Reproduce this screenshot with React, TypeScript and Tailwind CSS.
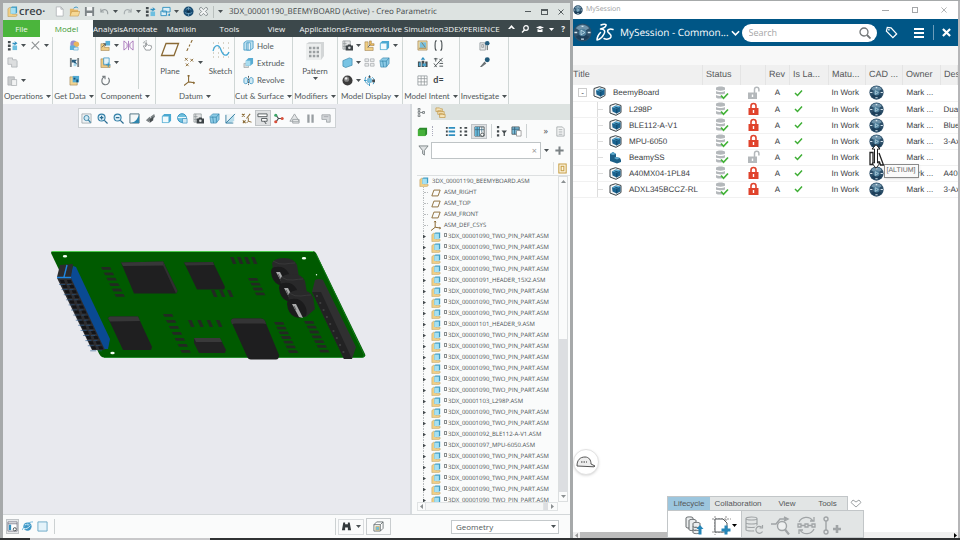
import type { ReactNode } from "react";
import clsx from "clsx";

const BLUE = "#2f8fc0";
const BROWN = "#8a6a35";
const INK = "#444b4e";
const GREY = "#a9adaf";

// All toolbar glyphs are drawn on a 12x12 grid
const glyphs: Record<string, ReactNode> = {
  asm: (
    <>
      <path d="M1 3l2-1.5h3V9h5v1.5L9.500 11.500H1z" fill="#f0cf86" stroke="#b08c48" strokeWidth=".5" />
      <path d="M4 2l1.500-1.500H11V7L9.500 8.500H4z" fill="#3f9cc4" />
      <path d="M4 2h5.500v6.500H4z" fill="#a5e0f2" />
    </>
  ),
  newFile: <path d="M2.500 1h5l2.500 2.500V11h-7.500zM7.500 1v2.500H10" fill="#fff" stroke={GREY} strokeWidth=".8" />,
  open: (
    <>
      <path d="M1 3h4l1 1h4v7H1z" fill="#e5b765" />
      <path d="M3 6h9l-2 5H1z" fill="#f6d894" stroke="#b98a3c" strokeWidth=".5" />
      <path d="M5 2.500c2-2 4-1.500 5 0" fill="none" stroke={BLUE} />
    </>
  ),
  save: (
    <>
      <path d="M1 1h9.500l.5.500V11H1z" fill="#7d8487" />
      <path d="M3 1h6v4H3zM3 7.500h6V11H3z" fill="#f2f4f4" />
    </>
  ),
  undo: <path d="M2 3v3.500h3.500M2.300 6C5 2.500 10 3.500 9.500 9" fill="none" stroke="#9aa1a3" strokeWidth="1.200" />,
  redo: <path d="M10 3v3.500H6.500M9.700 6C7 2.500 2 3.500 2.500 9" fill="none" stroke="#a9b0b2" strokeWidth="1.200" />,
  regen: (
    <>
      <path d="M1 1h3v2.500H1zM1 5h3v2.500H1zM1 9h3v2.500H1z" fill={INK} />
      <path d="M6 6h5v5H6z" fill="#6dbfe0" />
      <path d="M6 3h3l-1-2 3.500 2.500L8 6V4.500H6z" fill={BLUE} />
    </>
  ),
  windows: (
    <>
      <path d="M3 1.500h8v5H3zM1 5.500h6v5H1z" fill="#d9eef7" stroke={BLUE} />
      <path d="M8 10l3-2v3z" fill={BLUE} />
    </>
  ),
  globe: (
    <>
      <circle cx="6" cy="6" r="5.500" fill="#174a70" />
      <path d="M3 4c2-2 4-2 6 0M2 7c3 2 5 2 8 0M6 1v10" fill="none" stroke="#7fb4d2" strokeWidth=".7" />
      <circle cx="6" cy="6" r="1.500" fill="#0c2d48" />
    </>
  ),
  closeBox: <path d="M2 2l1.500-.5L6 4l2.500-2.500L10 2l.5 1.500L8 6l2.500 2.500L10 10l-1.500.5L6 8l-2.500 2.500L2 10l-.5-1.500L4 6 1.500 3.500z" fill="#f3f5f5" stroke="#777f82" strokeWidth=".9" />,
  cross: <path d="M2 2l8 8.500M10 1.500L1.500 10" stroke="#8d9294" strokeWidth="1.200" fill="none" />,
  copy: <path d="M1 1h5v2h4l1 1v7H5V8H1z" fill="#dcdedf" stroke={GREY} strokeWidth=".8" />,
  paste: (
    <>
      <path d="M1 2h7v9H1z" fill="#c9cccd" stroke={GREY} strokeWidth=".8" />
      <path d="M5 5h5.500v6.500H5z" fill="#f1f2f2" stroke={GREY} strokeWidth=".8" />
    </>
  ),
  userFeature: (
    <>
      <circle cx="5" cy="4" r="3.500" fill="#9b8fd0" />
      <circle cx="8" cy="4.500" r="3" fill="#eab65d" />
      <path d="M1 6h5l1 1v4H1z" fill="#5fb1d8" />
      <path d="M5 8h5v3H5z" fill="#d7ecf6" stroke={BLUE} strokeWidth=".5" />
    </>
  ),
  copyGeom: (
    <>
      <path d="M1 1h2v10H1zM9 1h2v10H9z" fill="#7a8184" />
      <path d="M3 3h6l-2 2 2 3H7L5 6H3z" fill="#2b5f80" />
      <path d="M5 7h3v3H5z" fill="#a5d9ee" />
    </>
  ),
  shrinkwrap: (
    <>
      <path d="M1 2h8v9H1z" fill="#f0d493" stroke={BROWN} strokeWidth=".5" />
      <path d="M4 1h7v7H4z" fill="#52aad2" />
      <path d="M5 3h2v2H5zM8 5h2v3H8z" fill="#174f74" />
    </>
  ),
  assemble: (
    <>
      <path d="M1 4h4v4h5v3.500H1z" fill="#eecb83" stroke={BROWN} strokeWidth=".5" />
      <path d="M6 1h5v5H6z" fill="#58afd6" />
      <path d="M2 8l4-4M6 6.500V4H3.500" stroke={INK} strokeWidth=".8" fill="none" />
    </>
  ),
  create: (
    <>
      <path d="M1 2h3v7h7v2.500H1z" fill="#eecb83" stroke={BROWN} strokeWidth=".5" />
      <path d="M4 1h6v7H4z" fill="#e3f3f9" stroke={BLUE} strokeWidth=".8" />
      <path d="M9 6v5M6.500 8.500h5" stroke={BLUE} />
    </>
  ),
  repeat: <path d="M2.500 1.500h3v3M5 2C1 3.500 1 9.500 5 10.500s7-4 4-7.500" fill="none" stroke="#777d80" strokeWidth="1.200" />,
  mirror: <path d="M1 1l3.500 3v4L1 11zM11 1L7.500 4v4L11 11zM6 1v10" fill="none" stroke="#a26bb5" strokeWidth=".9" />,
  drag: (
    <>
      <path d="M4 11L1.500 6.500l1-.5L4 7.500V3h1v3l1-1 1 1 1-.5 1 1 1-.5.5 2L9 11z" fill="#fff" stroke="#777d80" strokeWidth=".8" />
      <path d="M4.500 0v2M1 3h2M2 1l1 1" stroke="#777d80" strokeWidth=".7" />
    </>
  ),
  axis: <path d="M9 0L7.500 3M6.500 5l-1 2M4.500 9L3 12" stroke={BROWN} strokeWidth="1.200" />,
  points: <path d="M1 1l3 3m0-3L1 4M7 2l3 3m0-3L7 5M2 7l3 3m0-3l-3 3" stroke={BROWN} strokeWidth="1" />,
  csys: <path d="M5 0v7.500M5 7.500l6.500 1M5 7.500L0 11.500M4 1.500L5 0l1 1.500M10 7.500l1.500 1-1.500 1" fill="none" stroke={BROWN} strokeWidth="1.200" />,
  hole: (
    <>
      <path d="M1 3l3-2h7v8l-3 2H1z" fill="#bfe2f0" stroke={BLUE} strokeWidth=".8" />
      <path d="M4 3h4v8H4z" fill="#fff" stroke={BLUE} strokeWidth=".7" />
      <path d="M5.500 3v8" stroke={BLUE} />
    </>
  ),
  extrude: (
    <>
      <path d="M1 7h5v4.500H1z" fill="#d5d8d9" stroke="#8d9497" strokeWidth=".6" />
      <path d="M3 4l3-3h5v6L8 9.500H3z" fill="#58acd3" />
      <path d="M3 4h5v5.500H3z" fill="#a9dcef" />
    </>
  ),
  revolve: (
    <>
      <path d="M1 5c0-3 4-3 4 0v3c0 2-4 2-4 0zM7 5c0-3 4-3 4 0v3c0 2-4 2-4 0z" fill="#cfe9f4" stroke={BLUE} strokeWidth=".8" />
      <path d="M6 1v10" stroke={INK} strokeDasharray="2 1" />
    </>
  ),
  camera: (
    <>
      <path d="M1 1h8v9H1zM3 1v9M1 4h4M1 7h4" fill="#e4e6e7" stroke="#8d9497" strokeWidth=".8" />
      <path d="M4 6h2l.5-1h3l.5 1h2v5.500H4z" fill="#3d4447" />
      <circle cx="8" cy="8.500" r="1.400" fill="#dfe2e3" />
    </>
  ),
  section: <path d="M1 4l7-3 3 1v7l-7 2.500L1 10z" fill="#78c4e4" stroke="#3280a5" strokeWidth=".7" />,
  sphere: (
    <>
      <circle cx="6" cy="6" r="5.500" fill="#3b3b3b" />
      <circle cx="5" cy="4.500" r="2.800" fill="#858585" />
      <circle cx="4.500" cy="3.700" r="1.300" fill="#eee" />
    </>
  ),
  explode: (
    <>
      <path d="M1 2h3.500v6H10v3.500H1z" fill="#f0cf86" stroke={BROWN} strokeWidth=".5" />
      <path d="M6 1h2v3h3v2H6z" fill="#eebd5e" stroke={BROWN} strokeWidth=".5" />
      <path d="M4 8l3-3" stroke={INK} strokeWidth=".8" />
    </>
  ),
  shaded: (
    <>
      <path d="M1 3.500L3.500 1H11v7.500L8.500 11H1z" fill="#4ba9d2" />
      <path d="M1.500 3.500h7v7h-7z" fill="#f1fafd" stroke="#4ba9d2" strokeWidth=".6" />
    </>
  ),
  listGrey: <path d="M1 2h4v3H1zM1 7h4v3H1zM7 2h4v3H7zM7 7h4v3H7z" fill="#e9ebeb" stroke={GREY} strokeWidth=".8" />,
  cylinders: (
    <>
      <path d="M1 4l3-3h7v6l-3 4H2z" fill="#8ccbe6" stroke="#3585ac" strokeWidth=".7" />
      <path d="M1.500 4.500h6.500v6M4 4l1 7M8 4.500L11 1" fill="none" stroke="#3585ac" strokeWidth=".8" />
    </>
  ),
  spin: (
    <>
      <path d="M4 4h4v4H4z" fill="#7cc4e2" stroke={BLUE} strokeWidth=".6" />
      <path d="M6 0v3M6 9v3M0 6h3M9 6h3M2 2c-2 4 0 7 3 8.500M10 10c2-4 1-6-1-7.500" fill="none" stroke={BLUE} />
      <path d="M5 1h2v2H5zM9 5h3v3H9z" fill={INK} />
    </>
  ),
  family: (
    <>
      <path d="M1 1h10v10H1z" fill="#f3dca5" stroke={BROWN} strokeWidth=".6" />
      <path d="M3 2.500h7v6H3z" fill="#76c0e0" />
      <path d="M2 9h8M5 2.500L9 8" stroke={BROWN} strokeWidth=".8" />
    </>
  ),
  brackets: <path d="M4 1H3C2 2 2 10 3 11h1M8 1h1c1 1 1 9 0 10H8" fill="none" stroke={INK} strokeWidth="1.200" />,
  publish: (
    <>
      <path d="M1 5h3v6H1zM5 4h3v7H5zM9 5h2.500v6H9z" fill={INK} />
      <path d="M2 6h2v4H2zM6 7h4v3H6z" fill="#49a2cb" />
      <path d="M6.500 0L9 3H4z" fill={BLUE} />
    </>
  ),
  switchDim: <path d="M1 2h4M3 1v4M7 7h4M7 10h4M10.500 1L1.500 11M7 2l3 3M1 7l3 4" fill="none" stroke={INK} />,
  tableGrid: <path d="M1 1h10v10H1zM1 4h10M1 7.500h10M4.500 1v10M8 1v10" fill="#fff" stroke="#8b9194" strokeWidth=".8" />,
  inspect: (
    <>
      <path d="M1 3h6v8H1zM3 5h2v3H3z" fill="#e5e7e8" stroke="#8b9194" strokeWidth=".8" />
      <circle cx="9" cy="3.500" r="2.500" fill="#275f80" />
      <path d="M9 6v5" stroke={INK} />
    </>
  ),
  measure: (
    <>
      <path d="M1 11l5-6 2 2-5 4z" fill="#6b7275" />
      <circle cx="9" cy="3" r="2.700" fill="#1f5878" />
    </>
  ),
  refit: (
    <>
      <path d="M1 1h10v10H1z" fill="#eef3f5" stroke="#98a1a5" strokeWidth=".8" />
      <circle cx="6" cy="5.500" r="2.800" fill="#cfe9f5" stroke="#3b83a6" />
      <path d="M8 7.500l2.500 3" stroke="#3b83a6" strokeWidth="1.500" />
    </>
  ),
  zoomIn: (
    <>
      <circle cx="5" cy="5" r="3.800" fill="#dff1f9" stroke="#3480a8" strokeWidth="1.200" />
      <path d="M8 8l3.500 3.500M3 5h4M5 3v4" stroke="#2c6d92" strokeWidth="1.400" />
    </>
  ),
  zoomOut: (
    <>
      <circle cx="5" cy="5" r="3.800" fill="#dff1f9" stroke="#3480a8" strokeWidth="1.200" />
      <path d="M8 8l3.500 3.500M3 5h4" stroke="#2c6d92" strokeWidth="1.400" />
    </>
  ),
  repaint: (
    <>
      <path d="M1 1h10v10H1z" fill="#f4f8f9" stroke="#4c6d7c" />
      <path d="M11 2v9H2c5-1 7-4 9-9z" fill="#2e86ae" />
    </>
  ),
  render: (
    <>
      <path d="M1 8l4-4 2 2-3 4zM6 4l4-3 1 3-3 3z" fill="#7b8285" />
      <path d="M5 7l4-3v4l-4 3z" fill="#474d50" />
    </>
  ),
  globeBox: (
    <>
      <circle cx="5.500" cy="5.500" r="4.800" fill="#6fc0de" stroke={BLUE} />
      <path d="M1 5h9" stroke="#fff" />
      <path d="M6 6h5v5H6z" fill="#cfe8f3" stroke={BLUE} strokeWidth=".7" />
    </>
  ),
  plane2: (
    <>
      <path d="M1 1h9v10H1z" fill="#eef4f6" />
      <path d="M1 10L10 1v7l-3 3H1z" fill="#b7dceb" />
      <path d="M1 11L11 1M1 2v9h8" stroke="#397fa1" fill="none" />
    </>
  ),
  datumDisplay: (
    <>
      <path d="M1 1l3 3m0-3L1 4M2 8l3 3m0-3l-3 3M10 1L6 6" stroke={BROWN} strokeWidth="1.100" />
      <path d="M8 5v4l3.500 1M8 9l-2 2" stroke={BROWN} fill="none" />
    </>
  ),
  annot: (
    <>
      <path d="M1 1h10v3H1zM5 6h6v3H5z" fill="#fff" stroke={INK} strokeWidth=".9" />
      <path d="M8 9l2 3" stroke={INK} />
    </>
  ),
  spinCenter: (
    <>
      <path d="M3 2l3 4M3 10l3-4h5" stroke={INK} strokeWidth="1.200" fill="none" />
      <circle cx="3" cy="2.500" r="1.700" fill="#3aa567" />
      <circle cx="3" cy="9.500" r="1.700" fill="#d8503c" />
      <circle cx="10" cy="6" r="1.700" fill="#d8503c" />
    </>
  ),
  warn: <path d="M6 1L1 9h10zM4 7h7v4H4z" fill="#e3e5e7" stroke="#9fa4a7" />,
  pause: <path d="M2.500 1.500h2.500v9H2.500zM7 1.500h2.500v9H7z" fill="#989ea2" />,
  play: <path d="M1 2h9v8H6V7H1zM3 4h5" fill="#d6d9dc" stroke="#a5aaae" />,
  funnel: <path d="M1 1h10L7 6v5L5 9.500V6z" fill="#dfe2e3" stroke="#70777a" strokeWidth=".9" />,
  greenCube: (
    <>
      <path d="M1 4l2-2h8v7l-2 2H1z" fill="#2b8a2b" />
      <path d="M1 4h8v7H1z" fill="#46b03a" />
    </>
  ),
  list: (
    <>
      <path d="M4 1h7v2H4zM4 5h7v2H4zM4 9h7v2H4z" fill={BLUE} />
      <path d="M1 1h2v2H1zM1 5h2v2H1zM1 9h2v2H1z" fill={INK} />
    </>
  ),
  listDots: <path d="M2 1h2v2H2zM2 5h2v2H2zM2 9h2v2H2zM7 1h3v2H7zM7 5h3v2H7zM7 9h3v2H7z" fill={INK} />,
  columns: (
    <>
      <path d="M1 1h10v10H1z" fill="#fff" stroke={INK} strokeWidth=".9" />
      <path d="M1 1h5v10H1z" fill="#65b7d9" />
      <path d="M1 4h10M3.500 1v10M6 1v10M8.500 1v6" stroke="#39657c" strokeWidth=".8" />
      <circle cx="9" cy="9.500" r="1.800" fill="#fff" stroke={INK} />
    </>
  ),
  treeFilter: <path d="M1 0h2.500v2.500H1zM1 4.500h2.500V7H1zM1 9h2.500v2.500H1zM6 5h6L9.700 7.500V11H8.300V7.500z" fill={INK} />,
  treeSet: (
    <>
      <path d="M1 1h8v8H1z" fill="#7cc1de" stroke={INK} strokeWidth=".8" />
      <path d="M1 3.500h8M4 1v8" stroke="#37637b" />
      <path d="M6 5h5v6H6z" fill="#fff" stroke="#777" strokeWidth=".7" />
    </>
  ),
  page: <path d="M2 1h6l2 2v8H2zM4 4h4M4 6.500h4M4 9h4" fill="#f4f5f5" stroke="#989ea1" strokeWidth=".8" />,
  treeTab: <path d="M1.500.5h2.500v2.500H1.500zM1.500 4.700h2.500v2.500H1.500zM1.500 9h2.500v2.500H1.500zM4.500 6H7.500M7.500 4.700h2.500v2.500H7.500z" fill="none" stroke="#5f676a" />,
  folders: <path d="M1 1h4l1 1h2v3H1zM3 4h4l1 1h2v3H3zM5 7h3l1 1h2v3.500H5z" fill="#f4e3b8" stroke="#c39a4b" strokeWidth=".8" />,
  plus: <path d="M6 1.500v9M1.500 6h9" stroke="#7b8285" strokeWidth="2.200" />,
  colTool: <path d="M2 1h8v10H2zM4.500 3.500h3v5h-3z" fill="#fdf6e2" stroke="#c59c42" strokeWidth="1.100" />,
  plane: <path d="M3.500 2.500H11L8.500 9.500H1z" fill="none" stroke={BROWN} strokeWidth="1.100" />,
  navigator: (
    <>
      <path d="M1 1h10v10H1zM1 3h10" fill="#fff" stroke="#667" strokeWidth=".8" />
      <path d="M2 4h2.500v6H2z" fill={BLUE} />
      <circle cx="8.500" cy="9" r="1.700" fill="#fff" stroke={INK} />
    </>
  ),
  browser: (
    <>
      <circle cx="6" cy="6" r="4.500" fill="#3f97c6" />
      <path d="M3 4c2-1 3 1 5 0M2 8c2 1 5 0 7-3" stroke="#d9f0fa" fill="none" />
      <path d="M0 10C3 4 7 1 12 1" stroke="#6cb8dc" fill="none" />
    </>
  ),
  screen: <path d="M1 1h10v10H1z" fill="#e4f3fa" stroke="#6aa9c6" />,
  binoculars: <path d="M2.500 1.500h2v2h3v-2h2L11 10H7.500V7h-3v3H1z" fill="#33393c" />,
  cubeWire: (
    <>
      <path d="M1 4l3-3h7v7l-3 3H1zM1 4h7v7M8 4l3-3" fill="#fff" stroke="#5f676a" strokeWidth=".9" />
      <path d="M3 6h4v4H3z" fill="#71bfdf" stroke="#d8aa4e" strokeWidth=".7" />
    </>
  ),
};

function Glyph({ name, className = "size-[11px]" }: { name: string; className?: string }) {
  return (
    <svg viewBox="0 0 12 12" className={clsx("block shrink-0", className)} aria-hidden="true">
      {glyphs[name]}
    </svg>
  );
}

function Caret({ className = "text-[#4a5154]" }: { className?: string }) {
  return (
    <svg viewBox="0 0 5 3" className={clsx("block h-[3px] w-[5px] shrink-0", className)} aria-hidden="true">
      <path d="M0 0h5L2.500 3z" fill="currentColor" />
    </svg>
  );
}

function Tool({ name, label, caret, className }: { name: string; label: string; caret?: boolean; className?: string }) {
  return (
    <button type="button" aria-label={label} className={clsx("flex items-center gap-[3px]", className)}>
      <Glyph name={name} />
      {caret && <Caret />}
    </button>
  );
}

/* ---------- Creo ---------- */

function CreoTitleBar() {
  return (
    <div className="flex h-[17px] items-center bg-[#dde3e1] pl-[4px] text-[#3f4648]">
      <Glyph name="asm" />
      <span className="ml-px w-[35px] text-[11px] leading-3 font-semibold text-[#3c4447]">creo·</span>
      <div className="flex shrink-0 items-center gap-[4px]">
        <Tool name="newFile" label="New" />
        <Tool name="open" label="Open" />
        <Tool name="save" label="Save" />
        <Tool name="undo" label="Undo" caret />
        <Tool name="redo" label="Redo" caret />
        <Tool name="regen" label="Regenerate" />
        <Tool name="windows" label="Windows" caret />
        <Tool name="globe" label="3DEXPERIENCE" />
        <Tool name="closeBox" label="Close" />
        <span className="h-3 w-px bg-[#b9c0be]" />
        <Caret />
      </div>
      <h1 className="ml-[6px] whitespace-nowrap text-[8px]">3DX_00001190_BEEMYBOARD (Active) - Creo Parametric</h1>
      <div className="ml-auto flex items-center gap-[10px] pr-[6px] text-[#555c5e]">
        <button type="button" aria-label="Minimize" className="h-px w-[6px] bg-current" />
        <button type="button" aria-label="Restore" className="h-[6px] w-[7px] border border-t-2 border-current" />
        <button type="button" aria-label="Close window">
          <svg viewBox="0 0 6 6" className="block size-[6px]">
            <path d="M.5.500l5 5m0-5l-5 5" stroke="currentColor" />
          </svg>
        </button>
      </div>
    </div>
  );
}

function CreoTabs() {
  return (
    <nav className="flex h-[17px] items-stretch bg-[#3c484b] text-[8px] whitespace-nowrap text-[#f3f5f5]">
      <button type="button" className="w-[37px] shrink-0 bg-[#4bb53c]">File</button>
      <button type="button" className="w-[53px] shrink-0 bg-[#fafbfb] text-[#3f9a35]">Model</button>
      <button type="button">Analysis</button>
      <button type="button">Annotate</button>
      <button type="button" className="w-[48px] shrink-0">Manikin</button>
      <button type="button" className="w-[48px] shrink-0">Tools</button>
      <button type="button" className="w-[46px] shrink-0">View</button>
      <button type="button">Applications</button>
      <button type="button">Framework</button>
      <button type="button">Live Simulation</button>
      <button type="button">3DEXPERIENCE</button>
      <div className="ml-auto flex items-center gap-[6px] pr-[5px]">
        <svg viewBox="0 0 47 10" className="h-[10px] w-[47px] shrink-0" aria-hidden="true">
          <path d="M0 5l3.500-4L7 5H5L3.500 3.500 2 5z" fill="#fff" />
          <circle cx="18" cy="4" r="2.300" fill="none" stroke="#fff" strokeWidth="1.200" />
          <path d="M16.500 6L14 8.500" stroke="#fff" strokeWidth="1.500" />
          <path d="M28 3.500L32 2l4 1.500L32 5zM29.500 5v3h5V5L32 6z" fill="#fff" />
          <path d="M41 4h5l-2.500 3z" fill="#fff" />
        </svg>
        <button type="button" className="font-bold">?</button>
      </div>
    </nav>
  );
}

function Group({ title, className, children }: { title: string; className: string; children: ReactNode }) {
  return (
    <section className={clsx("flex shrink-0 flex-col border-r border-[#cfd6d5]", className)}>
      <div className="flex h-[52px] items-stretch">{children}</div>
      <button type="button" className="flex h-[14px] items-center justify-center gap-[3px] whitespace-nowrap">
        {title}
        <Caret />
      </button>
    </section>
  );
}

function Stack({ className, children }: { className?: string; children: ReactNode }) {
  return <div className={clsx("grid grid-rows-3 items-center", className)}>{children}</div>;
}

function Ribbon() {
  return (
    <div className="flex h-[67px] overflow-hidden bg-[#fafbfb] font-[Lato,sans-serif] text-[8px] text-[#51585a]">
      <Group title="Operations" className="w-[50px]">
        <Stack className="pl-[4px]">
          <Tool name="regen" label="Regenerate" caret />
          <Tool name="copy" label="Copy" />
          <Tool name="paste" label="Paste" caret />
        </Stack>
        <Stack className="pl-[4px]">
          <Tool name="cross" label="Delete" caret />
        </Stack>
      </Group>
      <Group title="Get Data" className="w-[43px]">
        <Stack className="w-full justify-center">
          <Tool name="userFeature" label="User-Defined Feature" />
          <Tool name="copyGeom" label="Copy Geometry" />
          <Tool name="shrinkwrap" label="Shrinkwrap" />
        </Stack>
      </Group>
      <Group title="Component" className="w-[60px]">
        <Stack className="pl-[4px]">
          <Tool name="assemble" label="Assemble" caret />
          <Tool name="create" label="Create" caret />
          <Tool name="repeat" label="Repeat" />
        </Stack>
        <Stack className="border-r border-[#cfd6d5] px-[4px]">
          <Tool name="mirror" label="Mirror Component" />
        </Stack>
        <Stack className="pl-[3px]">
          <Tool name="drag" label="Drag Components" />
        </Stack>
      </Group>
      <Group title="Datum" className="w-[79px]">
        <button type="button" className="flex w-[28px] flex-col items-center pt-[5px]">
          <svg viewBox="0 0 20 16" className="h-[16px] w-[20px]">
            <path d="M6 1.500h12.500L14 13.500H1.500z" fill="none" stroke={BROWN} strokeWidth="1.300" />
          </svg>
          <span className="mt-[7px]">Plane</span>
        </button>
        <Stack className="w-[24px]">
          <Tool name="axis" label="Axis" />
          <Tool name="points" label="Point" caret />
          <Tool name="csys" label="Coordinate System" />
        </Stack>
        <button type="button" className="flex w-[25px] flex-col items-center pt-[5px]">
          <svg viewBox="0 0 18 16" className="h-[16px] w-[18px]">
            <path d="M1 1h16M1 6h16M1 11h16M1 15h16" stroke="#b5ab94" strokeDasharray="1 4" fill="none" />
            <path d="M1 9C3 2 7 2 9 8s6 7 8 2" fill="none" stroke="#45a8d6" strokeWidth="1.300" />
          </svg>
          <span className="mt-[7px]">Sketch</span>
        </button>
      </Group>
      <Group title="Cut & Surface" className="w-[58px]">
        <Stack className="pl-[8px]">
          <button type="button" className="flex items-center gap-[3px]"><Glyph name="hole" />Hole</button>
          <button type="button" className="flex items-center gap-[3px]"><Glyph name="extrude" />Extrude</button>
          <button type="button" className="flex items-center gap-[3px]"><Glyph name="revolve" />Revolve</button>
        </Stack>
      </Group>
      <Group title="Modifiers" className="w-[45px]">
        <button type="button" className="flex w-full flex-col items-center pt-[4px]">
          <svg viewBox="0 0 20 20" className="size-[20px]">
            <path d="M1 3l3-2h15v14l-3 4H1z" fill="#d3d6d7" />
            <path d="M1 3h15v16H1z" fill="#eceeee" />
            <path d="M4 7h10M4 11h10M4 15h10" stroke="#9a9fa1" strokeWidth="2.500" strokeDasharray="2.500 1.300" />
          </svg>
          <span className="mt-[4px]">Pattern</span>
          <Caret />
        </button>
      </Group>
      <Group title="Model Display" className="w-[65px]">
        <Stack className="pl-[4px]">
          <Tool name="camera" label="Manage Views" caret />
          <Tool name="section" label="Section" caret />
          <Tool name="sphere" label="Appearances" caret />
        </Stack>
        <Stack className="pl-[3px]">
          <Tool name="explode" label="Exploded View" />
          <Tool name="listGrey" label="Toggle Status" />
          <Tool name="spin" label="Perspective" />
        </Stack>
        <Stack className="pl-[4px]">
          <Tool name="shaded" label="Display Style" caret />
          <Tool name="cylinders" label="Component Display" />
        </Stack>
      </Group>
      <Group title="Model Intent" className="w-[57px]">
        <Stack className="pl-[14px]">
          <Tool name="family" label="Component Interface" />
          <Tool name="publish" label="Publish Geometry" />
          <Tool name="tableGrid" label="Family Table" />
        </Stack>
        <Stack className="pl-[5px]">
          <Tool name="brackets" label="Parameters" />
          <Tool name="switchDim" label="Switch Dimensions" />
          <button type="button" className="text-[9px] leading-3 font-bold text-[#3c4447]">d=</button>
        </Stack>
      </Group>
      <Group title="Investigate" className="w-[49px]">
        <Stack className="w-full justify-center">
          <Tool name="inspect" label="Bill of Materials" />
          <Tool name="measure" label="Reference Viewer" />
        </Stack>
      </Group>
    </div>
  );
}

const viewTools = [
  "refit", "zoomIn", "zoomOut", "repaint", "render", "shaded", "globeBox", "camera",
  "cylinders", "plane2", "datumDisplay", "annot", "spinCenter", "warn", "pause", "play",
];

// Small surface-mount parts: start point, step, count, orientation
const smd = [
  { x: 101, y: 267, dx: 2.7, dy: 5.4, n: 6, flat: true },
  { x: 163, y: 314, dx: 2.9, dy: 6, n: 7, flat: true },
  { x: 248, y: 278, dx: 2.3, dy: 4.8, n: 4, flat: true },
  { x: 274, y: 322, dx: 2.3, dy: 4.7, n: 7, flat: true },
  { x: 304, y: 321, dx: 2.5, dy: 4.8, n: 7, flat: true },
  { x: 188, y: 320, dx: 9.3, dy: 0, n: 4, flat: false },
  { x: 230, y: 257, dx: 7, dy: 0, n: 4, flat: false },
  { x: 211, y: 290, dx: 8, dy: 0, n: 3, flat: false },
];

const capacitors = [
  { x: 0, y: 0 },
  { x: 8, y: 16 },
  { x: 16, y: 32 },
];

function Board() {
  return (
    <svg viewBox="48 249 318 112" className="mt-[121px] h-[112px] w-[318px] shrink-0 overflow-visible" role="img" aria-label="Beemyboard assembly">
      <path d="M51 253q0-2 2-2h259q3 0 4 2l49 101q1 3-2 3.500H104q-3 0-5-4z" fill="#005a00" />
      <path d="M52 251.500h261" stroke="#5fe65f" strokeWidth=".8" />
      <path d="M104 357.500h258q3 0 2-3L316 254" stroke="#13831a" strokeWidth=".8" fill="none" />
      {smd.map((s) =>
        Array.from({ length: s.n }, (_, i) => (
          <path
            key={`${s.x}-${i}`}
            transform={`translate(${s.x + s.dx * i} ${s.y + s.dy * i})`}
            d={s.flat ? "M0 0h9l1.500 2.800H1.500z" : "M0 0h3.500l3 7H3z"}
            fill="#222a22"
          />
        )),
      )}
      {/* pin header, left */}
      <path d="M73 266l3 1 34 72-2 10h-8L70 277z" fill="#0a4a93" />
      <path d="M60 265l13-1-2 13H57z" fill="#2b2b2d" />
      <path d="M57 278h14l34 72H92z" fill="#2d2d30" />
      {Array.from({ length: 14 }, (_, i) => (
        <g key={i} transform={`translate(${i * 2.4} ${i * 5.1})`}>
          <path d="M60 280h4l1 3h-4zM67 280h4l1 3h-4z" fill="#141416" />
          <path d="M59 284.500h6M67 284.500h4" stroke="#23588c" strokeWidth=".6" />
        </g>
      ))}
      <path d="M57 277.500h14M67 265l-3 12" stroke="#1f86e0" strokeWidth="1.400" fill="none" />
      {/* ICs */}
      <path d="M121 262.500l42-1 14.500 29.500-1.500 2.500h-42z" fill="#1f1f20" />
      <path d="M121 262.500l42-1 2 4-42 .5z" fill="#373738" />
      <path d="M163 261.500l14.500 29.500-1.500 2.500-13-28z" fill="#303031" />
      <path d="M184 262.500l29-.5 12 25-1 2.500h-27z" fill="#1f1f20" />
      <path d="M184 262.500l29-.5 1 3-28 .5z" fill="#333334" />
      <path d="M108 318l2-1.500h28l14 30.500-1 3h-28z" fill="#1f1f20" />
      <path d="M108 318l2-1.500h28l2 4.500-30 .5z" fill="#373738" />
      <path d="M194 338h26l6 12-1 3h-26l-5-10z" fill="#222223" />
      <path d="M194 338h26l2 4h-26z" fill="#39393a" />
      <path d="M231 321q0-2.500 3-2.500h27q3 0 4 2.500l14 34q0 4.500-3 4.500h-25q-3 0-4-3z" fill="#1e1e1f" />
      <path d="M231 321q0-2.500 3-2.500h27q3 0 4 2.500l1 3-3-.500h-28q-2 0-3 1z" fill="#343435" />
      {/* capacitors */}
      {capacitors.map((c) => (
        <g key={c.x} transform={`translate(${c.x} ${c.y})`}>
          <path d="M272 263q3-5 12-5 10 0 13 7l2 12-9 8-15-3z" fill="#29292a" />
          <path d="M271 272q0-5 5-5 8-1 12 5t2 12q-5 3-11 1-7-3-8-13z" fill="#1b1b1c" />
          <path d="M276 272h4l7 14-4-1z" fill="#a9aaab" />
          <path d="M278 274l2 4" stroke="#444" strokeWidth=".8" />
          <path d="M273 261q6 4 12 3t10-1" stroke="#3e3e3f" strokeWidth=".7" fill="none" />
        </g>
      ))}
      {/* socket strip, right */}
      <path d="M312 292l3-12q4-2 8 0l33 67-4 12h-8z" fill="#303031" />
      <path d="M312 292h9l31 67h-8z" fill="#222223" />
      {Array.from({ length: 9 }, (_, i) => (
        <circle key={i} cx={317 + i * 3.3} cy={296 + i * 7} r="1.100" fill="#414142" />
      ))}
      <g fill="#f4fff4">
        <ellipse cx="65" cy="256.300" rx="2.200" ry="1.300" />
        <ellipse cx="112.500" cy="353" rx="2.200" ry="1.300" />
        <ellipse cx="304" cy="258.300" rx="2.200" ry="1.300" />
        <circle cx="316.500" cy="274.800" r=".7" />
      </g>
    </svg>
  );
}

function Viewport() {
  return (
    <main className="flex min-w-0 flex-1 flex-col items-center overflow-hidden bg-[#e8e9ee] pt-[4px]">
      <div className="flex h-[20px] shrink-0 items-center border border-[#cdd1d4] bg-[#fafbfc]">
        {viewTools.map((name) => (
          <button
            key={name}
            type="button"
            aria-label={name}
            className={clsx(
              "flex h-[16px] w-[16px] items-center justify-center",
              name === "annot" && "border border-[#c0c4c7] bg-[#dfe1e3]",
            )}
          >
            <Glyph name={name} />
          </button>
        ))}
      </div>
      <Board />
    </main>
  );
}

const two = "3DX_00001090_TWO_PIN_PART.ASM";
const parts = [
  two, two, two, two,
  "3DX_00001091_HEADER_15X2.ASM",
  two, two, two,
  "3DX_00001101_HEADER_9.ASM",
  two, two, two, two, two, two,
  "3DX_00001103_L298P.ASM",
  two, two,
  "3DX_00001092_BLE112-A-V1.ASM",
  "3DX_00001097_MPU-6050.ASM",
  two, two, two, two, two,
];

const datums = [
  { name: "ASM_RIGHT", icon: "plane" },
  { name: "ASM_TOP", icon: "plane" },
  { name: "ASM_FRONT", icon: "plane" },
  { name: "ASM_DEF_CSYS", icon: "csys" },
];

function ModelTree() {
  return (
    <aside className="flex w-[160px] shrink-0 flex-col border-l-2 border-[#d6dade] bg-[#fafbfb] text-[#4b5254]">
      <div className="flex h-[16px] bg-[#dde3e1]">
        <button type="button" aria-label="Model Tree" className="flex w-[19px] items-center justify-center bg-[#fafbfb]">
          <Glyph name="treeTab" className="size-[9px]" />
        </button>
        <button type="button" aria-label="Folder Browser" className="flex w-[19px] items-center justify-center">
          <Glyph name="folders" />
        </button>
      </div>
      <div className="flex h-[22px] items-center pl-[5px]">
        <Tool name="greenCube" label="Model" />
        <span className="mr-[12px] ml-[4px] h-[10px] border-l border-dotted border-[#aab]" />
        <Tool name="list" label="Show" />
        <Tool name="listDots" label="Expand" className="mr-[2px] ml-[2px]" />
        <button type="button" aria-label="Columns" className="flex h-[15px] w-[16px] items-center justify-center border border-[#c0c4c7] bg-[#dfe1e3]">
          <Glyph name="columns" />
        </button>
        <span className="mx-[4px] h-[14px] w-px bg-[#ccd1d2]" />
        <Tool name="treeFilter" label="Tree Filters" />
        <Tool name="treeSet" label="Settings" className="ml-[4px]" />
        <span className="ml-[4px] h-[14px] w-px bg-[#ccd1d2]" />
        <span className="ml-auto text-[9px]">»</span>
        <Tool name="page" label="Report" className="mr-[4px] ml-[7px]" />
      </div>
      <div className="flex h-[17px] items-center pl-[6px]">
        <Glyph name="funnel" />
        <div className="ml-[2px] flex h-[17px] min-w-0 flex-1 items-center border border-[#bfc4c6] bg-white pr-[3px]">
          <input aria-label="Filter tree" className="min-w-0 flex-1 text-[8px] outline-none" />
          <button type="button" aria-label="Clear" className="text-[9px] leading-3 text-[#999]">×</button>
        </div>
        <Caret className="mx-[3px] text-[#4a5154]" />
        <Tool name="plus" label="Add" className="mr-[5px] ml-[2px]" />
      </div>
      <div className="ml-[5px] flex h-[17px] items-end border-b border-[#dde0e1] pr-[2px] pb-px">
        <span className="ml-auto mr-[3px] h-[12px] w-px bg-[#dde0e1]" />
        <Glyph name="colTool" />
      </div>
      <div className="ml-[5px] flex min-h-0 flex-1">
        <ul className="min-w-0 flex-1 overflow-hidden text-[6px] leading-[11px] whitespace-nowrap">
          <li className="flex h-[11px] items-center gap-[3px] pl-[2px]">
            <Glyph name="asm" className="size-[10px]" />
            3DX_00001190_BEEMYBOARD.ASM
          </li>
          {datums.map((d) => (
            <li key={d.name} className="ml-[6px] flex h-[11px] items-center gap-[3px] border-l border-dotted border-[#b8bcbe]">
              <span className="w-[4px] border-t border-dotted border-[#b8bcbe]" />
              <Glyph name={d.icon} className="size-[10px]" />
              {d.name}
            </li>
          ))}
          {parts.map((name, i) => (
            <li key={i} className="ml-[6px] flex h-[11px] items-center border-l border-dotted border-[#b8bcbe]">
              <svg viewBox="0 0 4 5" className="mr-[5px] -ml-px h-[5px] w-[3px] shrink-0" aria-hidden="true">
                <path d="M0 0l4 2.500L0 5z" fill="#444b4e" />
              </svg>
              <Glyph name="asm" className="size-[10px]" />
              <span className="mr-px mb-[3px] ml-[3px] h-[4px] w-[3px] shrink-0 border border-[#8a8f91]" />
              {name}
            </li>
          ))}
        </ul>
        <div className="mr-[2px] flex w-[10px] flex-col items-center border border-[#dcdfe0] bg-[#dcdee1]">
          <div className="flex h-1/2 w-full justify-center bg-[#fafbfb] pt-[3px]">
            <Caret className="rotate-180 text-[#8b9092]" />
          </div>
          <div className="mt-auto flex h-[9px] w-full items-center justify-center bg-[#fafbfb]">
            <Caret className="text-[#8b9092]" />
          </div>
        </div>
      </div>
      <div className="mr-[12px] mb-[3px] ml-[5px] flex h-[9px] items-center border border-[#e0e3e4] text-[#8b9092]">
        <Caret className="mx-px rotate-90 text-[#8b9092]" />
        <span className="h-full flex-1 border-x border-[#e0e3e4] bg-[#f6f7f7]" />
        <span className="h-full w-[4px] bg-[#dcdee1]" />
        <Caret className="mx-[2px] -rotate-90 text-[#8b9092]" />
      </div>
    </aside>
  );
}

function StatusBar() {
  return (
    <footer className="flex h-[24px] shrink-0 items-center border-t border-[#d3d7d9] bg-[#fafbfb] pl-[3px] text-[#51585a]">
      <button type="button" aria-label="Navigator" className="flex h-[15px] w-[13px] items-center justify-center border border-[#c0c4c7] bg-[#e4e6e8]">
        <Glyph name="navigator" />
      </button>
      <Tool name="browser" label="Browser" className="ml-[3px]" />
      <Tool name="screen" label="Full Screen" className="ml-[4px]" />
      <span className="ml-[6px] h-[15px] w-px bg-[#ccd1d2]" />
      <div className="ml-auto flex h-[17px] items-center border-l border-[#ccd1d2] pl-[2px]">
        <div className="flex h-[16px] items-center gap-[4px] border border-[#dadddf] px-[2px]">
          <Glyph name="binoculars" />
          <Caret />
        </div>
        <button type="button" aria-label="Selection box" className="ml-[2px] flex h-[17px] w-[25px] items-center justify-center border border-[#c9cdcf]">
          <Glyph name="cubeWire" />
        </button>
      </div>
      <div className="mr-[11px] ml-[60px] flex h-[14px] w-[108px] items-center border border-[#c4c9cb] bg-white pr-[2px]">
        <select aria-label="Selection filter" className="flex-1 appearance-none pl-[4px] text-[8px] leading-[12px] outline-none">
          <option>Geometry</option>
        </select>
        <Caret />
      </div>
    </footer>
  );
}

/* ---------- MySession ---------- */

function Compass({ className }: { className?: string }) {
  return (
    <svg viewBox="0 0 20 20" className={clsx("block shrink-0", className)} aria-hidden="true">
      <circle cx="10" cy="10" r="9.500" fill="#2d4f69" />
      <path d="M3 5.500a8.500 8.500 0 0 1 14 0l-4 2.500a4.500 4.500 0 0 0-6 0z" fill="#6f93aa" />
      <path d="M3 14.500a8.500 8.500 0 0 0 14 0l-4-2.500a4.500 4.500 0 0 1-6 0z" fill="#1d3f5a" />
      <circle cx="10" cy="10" r="4" fill="#4e7f9b" />
      <path d="M8.500 7.500l4 2.500-4 2.500z" fill="none" stroke="#c3dfec" strokeWidth=".9" />
      <path d="M1.500 10h3M15.500 10h3M8.500 17h3M9 3.500h2" stroke="#d5e5ee" strokeWidth="1.400" />
    </svg>
  );
}

function SessionBar() {
  return (
    <header className="flex h-[27px] items-center bg-[#005686] font-['Open_Sans',sans-serif] text-white">
      <Compass className="size-[19px]" />
      <svg viewBox="0 0 18 19" className="ml-[4px] h-[19px] w-[18px] shrink-0" aria-label="3DS">
        <g fill="none" stroke="#fff" strokeWidth="1.500" strokeLinecap="round" strokeLinejoin="round">
          <path d="M5 2c2-1 6-1 5 .5C9.500 4 7 5.500 4.500 6c4 0 5 2 3.500 5-1.500 3-4 5.500-7 6 0-3 1-5 3.500-7.500" />
          <path d="M17 6.500c-3-1-6.500 0-5 2.500 1 1.500 4 2.500 3 5-1 2.500-5 2.500-7 1.500" />
        </g>
      </svg>
      <span className="ml-[6px] shrink-0 whitespace-nowrap text-[10px]">MySession - Common...</span>
      <button type="button" aria-label="Switch dashboard" className="ml-[2px] shrink-0">
        <svg viewBox="0 0 10 6" className="block h-[6px] w-[9px]">
          <path d="M1 1l4 4 4-4" fill="none" stroke="#fff" strokeWidth="1.800" />
        </svg>
      </button>
      <form className="mr-[8px] ml-[2px] flex h-[18px] min-w-0 flex-1 items-center rounded-full bg-white pr-[6px] pl-[7px]">
        <input
          aria-label="Search"
          placeholder="Search"
          className="min-w-0 flex-1 text-[9px] text-gray-700 outline-none placeholder:text-[#a6a6a6]"
        />
        <svg viewBox="0 0 12 12" className="size-[12px] shrink-0" aria-hidden="true">
          <circle cx="5" cy="5" r="4" fill="none" stroke="#707476" strokeWidth="1.300" />
          <path d="M8 8l3.500 3.500" stroke="#707476" strokeWidth="1.800" />
        </svg>
      </form>
      <button type="button" aria-label="Tags" className="shrink-0">
        <svg viewBox="0 0 14 14" className="block size-[13px]">
          <path d="M1.500 5.500l1-4 4 .5L12.500 8.500 8.500 12.500z" fill="none" stroke="#fff" strokeWidth="1.400" />
          <circle cx="4.200" cy="4" r=".9" fill="#fff" />
        </svg>
      </button>
      <button type="button" aria-label="Menu" className="ml-[16px] shrink-0">
        <svg viewBox="0 0 10 10" className="block size-[10px]">
          <path d="M0 1h10M0 5h10M0 9h10" stroke="#fff" strokeWidth="1.800" />
        </svg>
      </button>
      <span className="ml-[9px] h-[15px] w-px shrink-0 bg-[#6d9dba]" />
      <button type="button" aria-label="Close session" className="mr-[7px] ml-[8px] shrink-0">
        <svg viewBox="0 0 10 10" className="block size-[9px]">
          <path d="M1 1l8 8m0-8L1 9" stroke="#fff" strokeWidth="2.400" />
        </svg>
      </button>
    </header>
  );
}

function ProductIcon({ part }: { part?: boolean }) {
  return (
    <svg viewBox="0 0 13 13" className="block size-[13px] shrink-0" aria-hidden="true">
      {part ? (
        <>
          <path d="M1 3l3-2 3 2v3l4 1 1 2v2l-4 1.500L1 10z" fill="#1c6088" />
          <path d="M1 3l3-2 3 2-3 1zM5 7l2-1 4 1-3 1.500z" fill="#5ea9cd" />
        </>
      ) : (
        <>
          <path d="M6.500.7L12 2.500v7L7 12.300 1 10V2.500z" fill="#f3f5f6" stroke="#3c4347" strokeWidth="1" />
          <path d="M3 4.500L7 2.500l4.500 1v5L7.500 10.500 3.500 8.500z" fill="#1a6390" />
          <path d="M3 4.500L7 2.500l4.500 1-3.500 2z" fill="#5fb0d8" />
          <path d="M7.800 5.500v5M5.500 4l4 1" stroke="#0e3d5c" strokeWidth=".8" />
        </>
      )}
    </svg>
  );
}

function SavedIcon() {
  return (
    <svg viewBox="0 0 14 14" className="mx-auto block size-[14px]" aria-label="Up to date">
      <g fill="#b4b8bb">
        <path d="M1 2c0-2 9-2 9 0v1.500c0 1.500-9 1.500-9 0z" />
        <path d="M1 5c2 1.300 7 1.300 9 0v2.500c-2 1.200-7 1.200-9 0z" />
        <path d="M1 9c2 1 5 1.200 6 .8L8 12c-3 1-7 .5-7-.8z" />
      </g>
      <path d="M6 9.500L8.500 12.300 13 7.500" fill="none" stroke="#43b338" strokeWidth="1.700" />
    </svg>
  );
}

function Lock({ locked }: { locked: boolean }) {
  return (
    <svg viewBox="0 0 13 14" className="mx-auto block h-[14px] w-[13px]" aria-label={locked ? "Locked" : "Unlocked"}>
      {locked ? (
        <>
          <path d="M4 7V4a2.500 2.500 0 0 1 5 0V7" fill="none" stroke="#e0432c" strokeWidth="1.600" />
          <path d="M1.500 6h10v7h-10z" fill="#e0432c" />
        </>
      ) : (
        <>
          <path d="M7.500 7V3.500a2.200 2.200 0 0 1 4.400 0v2" fill="none" stroke="#b4b8bb" strokeWidth="1.500" />
          <path d="M1 6.500h9V13H1z" fill="#b4b8bb" />
        </>
      )}
      <path d={locked ? "M6.500 8v3" : "M5.500 8.500v2.500"} stroke="#fff" strokeWidth="1.400" />
    </svg>
  );
}

const rows = [
  { title: "BeemyBoard", locked: false, des: "", root: true },
  { title: "L298P", locked: true, des: "Dual" },
  { title: "BLE112-A-V1", locked: true, des: "Blueto" },
  { title: "MPU-6050", locked: true, des: "3-Axis" },
  { title: "BeamySS", locked: false, des: "", part: true, hover: true },
  { title: "A40MX04-1PL84", locked: true, des: "A40M" },
  { title: "ADXL345BCCZ-RL", locked: true, des: "3-Axis" },
];

const headers = ["Title", "Status", "", "Rev", "Is La...", "Matu...", "CAD ...", "Owner", "Des"];

function HoverTip() {
  return (
    <>
      <svg viewBox="0 0 16 25" className="absolute -top-[6px] left-0 z-10 h-[25px] w-[16px]" aria-hidden="true">
        <path d="M1 8.500h3v12H1zM10 9l4.500 12h-3L10.500 18H9" fill="#fff" stroke="#222" strokeWidth="1.300" />
        <path d="M7 .7L11 5H8.500v14H11l-4 5.300L3 19h2.500V5H3z" fill="#fff" stroke="#222" />
      </svg>
      <span role="tooltip" className="absolute top-[14px] left-[15px] z-20 border border-[#8a8a8a] bg-[#fafafa] px-[2px] text-[7px] leading-[12px] text-[#666] shadow-sm">
        [ALTIUM]
      </span>
    </>
  );
}

function PartsTable() {
  return (
    <table className="w-full table-fixed border-collapse text-[8px] text-[#3a3d3f]">
      <colgroup>
        <col />
        <col className="w-[38px]" />
        <col className="w-[25px]" />
        <col className="w-[24px]" />
        <col className="w-[39px]" />
        <col className="w-[37px]" />
        <col className="w-[37px]" />
        <col className="w-[38px]" />
        <col className="w-[17px]" />
      </colgroup>
      <thead>
        <tr className="h-[20px] bg-[#f0f0f0] text-left text-[9px] whitespace-nowrap text-[#55585a]">
          {headers.map((h, i) => (
            <th key={i} className={clsx("border-r border-[#e4e4e4] p-0 font-normal", i > 0 && "pl-[3px]")}>{h}</th>
          ))}
        </tr>
      </thead>
      <tbody>
        {rows.map((r) => (
          <tr key={r.title} className="h-[16px] border-b border-[#f1f1f1] leading-[15px] whitespace-nowrap">
            <td className="p-0">
              {r.root ? (
                <div className="flex items-center pl-[5px]">
                  <button type="button" aria-label="Collapse" className="mr-[6px] flex size-[9px] shrink-0 items-center justify-center border border-[#ccc] leading-[6px]">-</button>
                  <ProductIcon />
                  <span className="ml-[7px]">{r.title}</span>
                </div>
              ) : (
                <div className="ml-[24px] flex items-center border-l border-[#ddd]">
                  <span className="mr-[6px] h-px w-[5px] shrink-0 bg-[#ddd]" />
                  <ProductIcon part={r.part} />
                  <span className="ml-[7px]">{r.title}</span>
                </div>
              )}
            </td>
            <td className="p-0"><SavedIcon /></td>
            <td className="p-0"><Lock locked={r.locked} /></td>
            <td className="p-0 text-center">A</td>
            <td className="p-0 pl-[4px]">
              <svg viewBox="0 0 9 8" className="block h-[8px] w-[9px]" aria-label="Yes">
                <path d="M1 4l2.500 2.500L8 1.500" fill="none" stroke="#3fae35" strokeWidth="1.500" />
              </svg>
            </td>
            <td className="p-0 pl-[3px]">In Work</td>
            <td className="p-0 pl-[3px]">
              <div className="relative h-[15px]">
                {r.hover ? <HoverTip /> : <Compass className="size-[15px]" />}
              </div>
            </td>
            <td className="p-0 pl-[4px]">Mark ...</td>
            <td className="overflow-hidden p-0 pl-[3px]">{r.des}</td>
          </tr>
        ))}
      </tbody>
    </table>
  );
}

function ActionBar() {
  return (
    <div className="absolute bottom-0 left-[94px] w-[197px] text-[8px] text-[#55585a]">
      <div className="flex items-center">
        <div className="flex h-[14px] w-[181px] border border-b-0 border-[#c2c6c8] bg-[#e2e5e5]">
          <button type="button" className="w-[42px] bg-[#9cc6de]">Lifecycle</button>
          <button type="button" className="w-[56px]">Collaboration</button>
          <button type="button" className="w-[42px]">View</button>
          <button type="button" className="w-[39px]">Tools</button>
        </div>
        <svg viewBox="0 0 12 9" className="ml-[2px] h-[9px] w-[12px]" aria-hidden="true">
          <path d="M6 8L1 3.500 3 1l3 2 3-2 2 2.500z" fill="#fff" stroke="#9fa3a5" />
        </svg>
      </div>
      <div className="flex h-[28px] border border-[#c2c6c8] bg-[#e2e5e5]">
        <div className="flex w-[74px] items-center gap-[8px] border-r border-[#c2c6c8] bg-white pt-[3px] pl-[17px]">
          <button type="button" aria-label="Save">
            <svg viewBox="0 0 19 19" className="block size-[19px]">
              <g fill="#eceeef" stroke="#55595c" strokeWidth=".9">
                <path d="M1 2c0-1.500 7-1.500 7 0v9c0 1.500-7 1.500-7 0z" />
                <path d="M4 4.500c0-1.500 7-1.500 7 0v9c0 1.500-7 1.500-7 0z" />
                <path d="M8 7.500c0-1.500 7-1.500 7 0v9c0 1.500-7 1.500-7 0zM8 10.500c0 1.300 7 1.300 7 0M8 13.500c0 1.300 7 1.300 7 0" />
              </g>
              <path d="M15 9l3.500 4h-2v5.500h-3V13h-2z" fill="#2586b8" />
            </svg>
          </button>
          <button type="button" aria-label="New content" className="flex items-center gap-px">
            <svg viewBox="0 0 19 19" className="block size-[19px]">
              <path d="M3 0v19M0 3h19M0 16h12M14 0v6" stroke="#777" strokeDasharray="2 1" strokeWidth=".8" />
              <path d="M3 3h8l4 4v9H3z" fill="#fff" stroke="#55595c" />
              <path d="M14 9.500v9M9.500 14h9" stroke="#2586b8" strokeWidth="3" />
            </svg>
            <Caret className="text-black" />
          </button>
        </div>
        <div className="flex items-center gap-[7px] pt-[3px] pl-[3px] text-[#a0a4a6]">
          <button type="button" aria-label="Reload">
            <svg viewBox="0 0 19 19" className="block size-[19px]" fill="none" stroke="currentColor" strokeWidth="1.200">
              <path d="M1 2.500c0-2 11-2 11 0v11c0 2-11 2-11 0zM1 2.500c0 2 11 2 11 0M1 6.500c0 2 11 2 11 0M1 10c0 2 11 2 11 0" />
              <circle cx="14" cy="14" r="5" fill="#e2e5e5" stroke="none" />
              <path d="M17.500 15.500a3.500 3.500 0 1 1-1-4.500M17.500 9v3h-3" />
            </svg>
          </button>
          <button type="button" aria-label="Explore">
            <svg viewBox="0 0 19 19" className="block size-[19px]" fill="none" stroke="currentColor" strokeWidth="1.400">
              <path d="M0 8h5l4-5h6M13 1l4 2-4 2" />
              <circle cx="11" cy="10" r="4.500" fill="#eef0f0" />
              <path d="M14 13.500l4 5" strokeWidth="2.200" />
            </svg>
          </button>
          <button type="button" aria-label="Update maturity">
            <svg viewBox="0 0 19 19" className="block size-[19px]" fill="none" stroke="currentColor" strokeWidth="1.300">
              <path d="M2 6a8 8 0 0 1 14-1M17 1v4h-4M17 13a8 8 0 0 1-14 1M2 18v-4h4" />
              <path d="M1 8h3v3H1zM8 8h3v3H8zM15 8h3v3h-3zM4 9.500h4M11 9.500h4" />
            </svg>
          </button>
          <button type="button" aria-label="Insert">
            <svg viewBox="0 0 19 19" className="block size-[19px]" fill="none" stroke="currentColor" strokeWidth="1.400">
              <circle cx="3" cy="3" r="2" />
              <circle cx="3" cy="16" r="2" />
              <path d="M3 5v9" />
              <path d="M14 9v8M10 13h8" strokeWidth="2.600" />
            </svg>
          </button>
        </div>
      </div>
    </div>
  );
}

function MySession() {
  return (
    <div className="relative flex min-w-0 flex-col overflow-hidden border-r-2 border-[#b6b6b8] bg-white font-['Liberation_Sans',sans-serif]">
      <div className="flex h-[18px] items-center font-['Open_Sans',sans-serif] text-[7px] text-[#9a9c9e]">
        <Compass className="size-[10px]" />
        <span className="ml-[3px]">MySession</span>
        <div className="ml-auto flex items-center gap-[23px] pr-[11px] text-[#a5a7a9]">
          <button type="button" aria-label="Minimize" className="h-px w-[7px] bg-current" />
          <button type="button" aria-label="Maximize" className="size-[6px] border border-current" />
          <button type="button" aria-label="Close">
            <svg viewBox="0 0 7 7" className="block size-[6px]">
              <path d="M.5.500l6 6m0-6l-6 6" stroke="currentColor" />
            </svg>
          </button>
        </div>
      </div>
      <SessionBar />
      <div className="h-[19px] bg-[#f8f8f8]" />
      <PartsTable />
      <button
        type="button"
        aria-label="Assistant"
        className="absolute bottom-[63px] left-0 flex size-[26px] items-center justify-center rounded-full border border-[#e2e2e2] bg-white shadow-sm"
      >
        <svg viewBox="0 0 20 14" className="h-[14px] w-[20px]">
          <path d="M1 11c0-6 3-9 8-9 4 0 6 3 6 7l4 2-1 .8z" fill="#eee" stroke="#555" />
          <path d="M5 7h6" stroke="#777" strokeDasharray="1.500 1" strokeWidth="1.500" />
        </svg>
      </button>
      <div className="mt-auto flex h-[6px] items-center bg-[#f0f0f0]">
        <Caret className="mx-px rotate-90 text-[#999]" />
        <span className="h-full w-1/3 bg-[#bcbcbc]" />
        <Caret className="ml-auto -rotate-90 text-black" />
      </div>
      <ActionBar />
    </div>
  );
}

export default function App() {
  return (
    <div className="flex h-screen flex-col overflow-hidden bg-[#a6a9aa] font-['Open_Sans',sans-serif] [text-rendering:geometricPrecision]">
      <div className="grid min-h-0 flex-1 grid-cols-[573fr_387fr] pt-px">
        <div className="flex min-w-0 flex-col overflow-hidden border-t-2 border-r-3 border-l-3 border-[#a6a9aa]">
          <CreoTitleBar />
          <CreoTabs />
          <Ribbon />
          <div className="flex min-h-0 flex-1">
            <Viewport />
            <ModelTree />
          </div>
          <StatusBar />
        </div>
        <MySession />
      </div>
      <div className="h-[2px] bg-[#303234] pl-[30px]">
        <div className="h-full w-[180px] bg-[#c8c8ca]" />
      </div>
    </div>
  );
}
